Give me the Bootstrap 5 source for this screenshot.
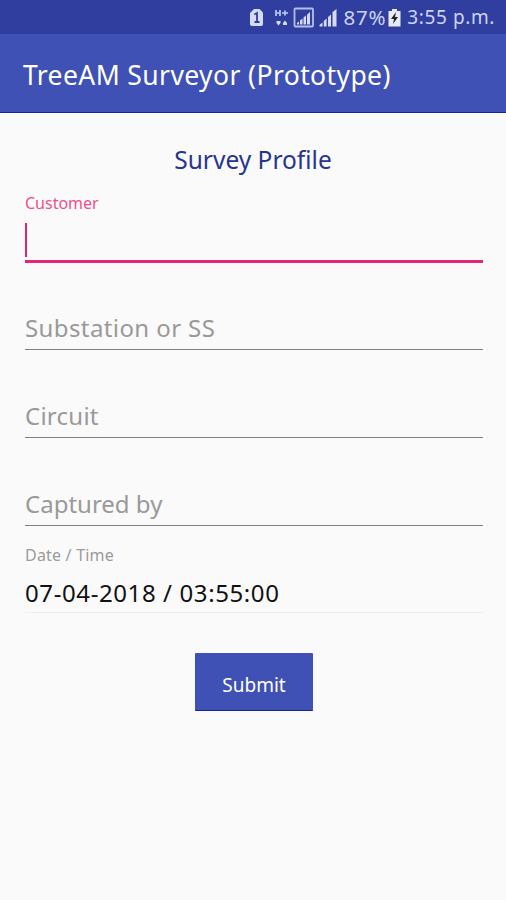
<!DOCTYPE html>
<html lang="en">
<head>
<meta charset="utf-8">
<meta name="viewport" content="width=device-width, initial-scale=1">
<title>TreeAM Surveyor</title>
<link href="https://cdn.jsdelivr.net/npm/bootstrap@5.3.0/dist/css/bootstrap.min.css" rel="stylesheet">
<style>
body{font-family:"Noto Sans",sans-serif;background:#fafafa;min-height:900px;overflow:hidden}
.status-bar{height:34px;background:#303f9f;color:#cdd3f5;font-size:19px;line-height:34px;padding-right:11px;white-space:nowrap}
.battery-text{font-size:20.5px;letter-spacing:.8px;margin-left:4px}
.clock-text{letter-spacing:.6px}
.battery-icon{margin:0 6px 0 2px}
.app-bar{height:79px;background:#3f51b5;border-bottom:1px solid #0d2a99;padding:4px 24px 0 23px}
.app-title{font-size:26.5px;line-height:36px;letter-spacing:.4px;white-space:nowrap}
.page-title{font-size:24.500px;line-height:32px;color:#28348f;margin-top:31px}
.survey-form{padding:0 23px 0 25px}
.hint-label{font-size:16px;line-height:22px;color:#9b9b9b}
.hint-active{color:#f0508a}
.date-label{letter-spacing:.2px}
.field-box{height:39px;font-size:24px;line-height:34px;color:#999;border-bottom:1px solid #808080;margin-top:49px;letter-spacing:.25px}
.field-wide{letter-spacing:.4px;margin-top:48px}
.field-tight{letter-spacing:0}
.first-group{margin-top:16px}
.field-active{height:49px;margin:0;border-bottom:3px solid #e6247a;padding-top:9px}
.caret{width:2px;height:34px;background:#e0246c}
.date-group{margin-top:18px}
.field-value{height:47px;margin-top:0;padding-top:10px;color:#111;border-color:#eee;letter-spacing:.6px}
.action-row{margin-top:40px}
.btn-submit{width:118px;height:58px;border:0;border-bottom:1px solid #14259c;border-radius:1px;background:#3f51b5;color:#fff;font-size:19px;padding:7px 0 0}
</style>
</head>
<body>
<header>
<div class="status-bar d-flex align-items-center justify-content-end">
<svg width="90" height="34" viewBox="0 0 90 34" fill="#d5daf7" aria-hidden="true">
<path d="M5 9h5.500l3.500 3.500V24a2 2 0 0 1-2 2H3a2 2 0 0 1-2-2V13z"/>
<path d="M5.300 14.500L8 13v9.500M5.500 22h5" fill="none" stroke="#303f9f" stroke-width="1.800"/>
<path d="M27 10v6M31 10v6M27 13h4M33 13h6M36 10.500v5" fill="none" stroke="#c0c8f0" stroke-width="1.700"/>
<path d="M27.500 21h4v2l-2 2.500-2-2.500zM34 25v-2l2-2.500 2 2.500v2z"/>
<rect x="45.500" y="8.500" width="18.500" height="18" rx="1" fill="none" stroke="#b4bdeb" stroke-width="1.800"/>
<path d="M48 24.500v-1.500l2-1.500v3zM51 24.500v-4l2.500-2v6zM54.500 24.500V17.500l2.500-2v9zM58 24.500V14.700l3-2.700v12.500z"/>
<path d="M70.500 26.500v-1.500l3-2.500v4zM74.800 26.500v-5.500l2.800-2.500v8zM79 26.500V17l3-2.500v12zM83.500 26.500V12l4-3v17.500z"/>
</svg>
<span class="battery-text">87%</span>
<svg class="battery-icon" width="13" height="34" viewBox="0 0 13 34" aria-hidden="true"><path d="M4 9h5v2h3.500v15.500H.5V11H4z" fill="#e9ebf8"/><path d="M8 12l-5 7h3l-1 5 5-7H7z" fill="#222"/></svg>
<span class="clock-text">3:55 p.m.</span>
</div>
<div class="app-bar navbar"><h1 class="app-title text-white fw-normal mb-0">TreeAM Surveyor (Prototype)</h1></div>
</header>
<main>
<h2 class="page-title text-center fw-normal mb-0">Survey Profile</h2>
<form class="survey-form">
<div class="first-group"><span class="hint-label hint-active d-block">Customer</span><div class="field-box field-active"><div class="caret"></div></div></div>
<div class="field-box field-wide">Substation or SS</div>
<div class="field-box">Circuit</div>
<div class="field-box field-tight">Captured by</div>
<div class="date-group"><span class="hint-label date-label d-block">Date / Time</span><div class="field-box field-value">07-04-2018 / 03:55:00</div></div>
<div class="action-row text-center"><button type="button" class="btn btn-submit">Submit</button></div>
</form>
</main>
<script src="https://cdn.jsdelivr.net/npm/bootstrap@5.3.0/dist/js/bootstrap.bundle.min.js"></script>
</body>
</html>
